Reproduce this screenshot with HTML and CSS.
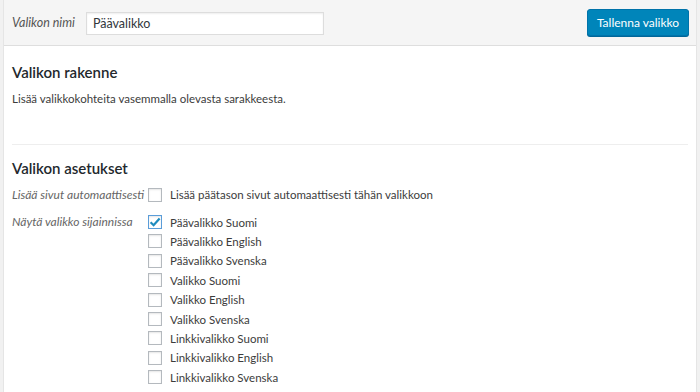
FILE: index.html
```html
<!DOCTYPE html>
<html lang="fi">
<head>
  <meta charset="UTF-8">
  <title>Valikot</title>
  <link rel="stylesheet" href="styles.css">
</head>
<body>
  <div class="menu-edit">
    <!-- Header -->
    <div class="menu-header">
      <label class="menu-name-label" for="menuName">Valikon nimi</label>
      <input type="text" id="menuName" class="menu-name" value="Päävalikko">
      <button class="save-button">Tallenna valikko</button>
    </div>

    <div class="menu-body">
      <h3 class="first">Valikon rakenne</h3>
      <p class="menu-hint">Lisää valikkokohteita vasemmalla olevasta sarakkeesta.</p>

      <div class="divider"></div>

      <h3>Valikon asetukset</h3>
      <div class="setting-row">
        <div class="setting-label">Lisää sivut automaattisesti</div>
        <div class="setting-input">
          <label class="check"><span class="box"></span>Lisää päätason sivut automaattisesti tähän valikkoon</label>
        </div>
      </div>
      <div class="setting-row">
        <div class="setting-label">Näytä valikko sijainnissa</div>
        <div class="setting-input locations">
          <label class="check"><span class="box checked"><svg viewBox="0 0 14 14" width="14" height="14"><path d="M2.6 7.2 L5.6 10.2 L11.6 3.4" fill="none" stroke="#1e8cbe" stroke-width="2.2"/></svg></span>Päävalikko Suomi</label>
          <label class="check"><span class="box"></span>Päävalikko English</label>
          <label class="check"><span class="box"></span>Päävalikko Svenska</label>
          <label class="check"><span class="box"></span>Valikko Suomi</label>
          <label class="check"><span class="box"></span>Valikko English</label>
          <label class="check"><span class="box"></span>Valikko Svenska</label>
          <label class="check"><span class="box"></span>Linkkivalikko Suomi</label>
          <label class="check"><span class="box"></span>Linkkivalikko English</label>
          <label class="check"><span class="box"></span>Linkkivalikko Svenska</label>
        </div>
      </div>
    </div>
  </div>
</body>
</html>
```

FILE: styles.css
```css
body {
  font-family: Lato, sans-serif;
  font-size: 11.5px;
  color: #3c3c3c;
  margin: 0;
  background: #f1f1f1;
  height: 100vh;
  overflow: hidden;
}
.menu-edit {
  margin: 0 3px;
  background: #fff;
  border: 1px solid #e5e5e5;
  border-top: none;
  height: 100%;
}
.menu-header {
  display: flex;
  align-items: center;
  height: 45px;
  padding: 0 7px 0 8px;
  background: #f5f5f5;
  border-bottom: 1px solid #dedede;
}
.menu-name-label {
  font-style: italic;
  font-size: 12.5px;
  color: #555;
  margin-right: 11px;
}
.menu-name {
  width: 238px;
  height: 23px;
  box-sizing: border-box;
  border: 1px solid #ddd;
  box-shadow: inset 0 1px 2px rgba(0, 0, 0, 0.07);
  font-family: inherit;
  font-size: 12.5px;
  color: #32373c;
  padding: 0 6px;
  margin: 1px 0 0;
}
.save-button {
  margin-left: auto;
  height: 27px;
  width: 102px;
  padding: 0;
  background: #0085ba;
  border: 1px solid #0073aa;
  border-radius: 3px;
  box-shadow: 0 1px 0 #006799;
  color: #fff;
  font-family: inherit;
  font-size: 12px;
  cursor: pointer;
}
.menu-body {
  padding: 0 8px;
}
.menu-body h3 {
  font-size: 15px;
  font-weight: 600;
  color: #23282d;
  margin: 0;
  line-height: 20px;
}
.menu-body h3.first {
  padding-top: 16px;
}
.menu-hint {
  margin: 8px 0 0;
  line-height: 18px;
}
.divider {
  border-top: 1px solid #eee;
  margin: 36px 0 13px;
}
.setting-row {
  display: flex;
  margin-top: 7px;
}
.setting-row + .setting-row {
  margin-top: 8px;
}
.setting-label {
  width: 136px;
  font-style: italic;
  font-size: 12px;
  color: #666;
  line-height: 19.4px;
}
.locations {
  display: flex;
  flex-direction: column;
}
.check {
  display: flex;
  align-items: center;
  height: 19.4px;
}
.box {
  width: 14px;
  height: 14px;
  box-sizing: border-box;
  border: 1px solid #b4b9be;
  box-shadow: inset 0 1px 2px rgba(0, 0, 0, 0.1);
  margin-right: 8px;
  display: inline-block;
}
.box.checked {
  border-color: #5b9dd9;
}
.box svg {
  display: block;
  margin: -1px;
}
```
